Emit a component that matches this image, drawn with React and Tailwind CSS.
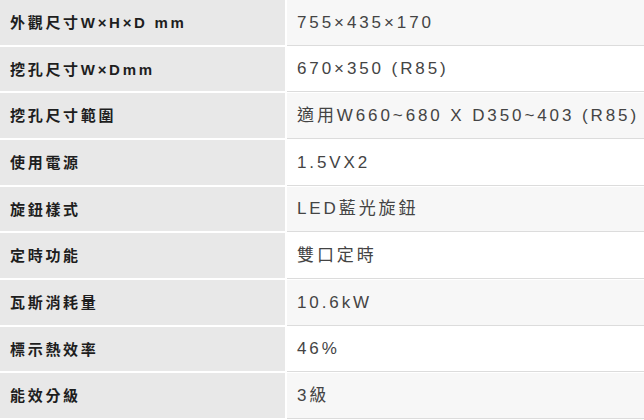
const specs = [
  ['外觀尺寸W×H×D mm', '755×435×170'],
  ['挖孔尺寸W×Dmm', '670×350 (R85)'],
  ['挖孔尺寸範圍', '適用W660~680 X D350~403 (R85)'],
  ['使用電源', '1.5VX2'],
  ['旋鈕樣式', 'LED藍光旋鈕'],
  ['定時功能', '雙口定時'],
  ['瓦斯消耗量', '10.6kW'],
  ['標示熱效率', '46%'],
  ['能效分級', '3級'],
]

export default function App() {
  return (
    <div className="w-[644px] h-[420px] overflow-hidden bg-white font-['Liberation_Sans','Noto_Sans_CJK_TC',sans-serif]">
      {specs.map(([label, value], i) => (
        <div key={i} className="flex h-[46.67px] gap-[2px]">
          <div className="w-[285px] shrink-0 bg-[#e8e8e8] border-b-2 border-white flex items-center pl-[10px] pt-[2px] text-[15px] font-bold tracking-[2.7px] text-[#1e1e1e]">
            {label}
          </div>
          <div className={`flex-1 flex items-center pl-[10px] border-b border-[#dcdcdc] mb-px text-[17px] tracking-[2.9px] text-[#444] ${i % 2 === 0 ? 'bg-[#f7f7f7]' : 'bg-white'}`}>
            {value}
          </div>
        </div>
      ))}
    </div>
  )
}
